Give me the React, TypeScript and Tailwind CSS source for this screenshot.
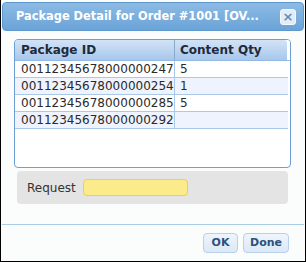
export default function App() {
  const rows = [
    { id: '00112345678000000247', qty: '5' },
    { id: '00112345678000000254', qty: '1' },
    { id: '00112345678000000285', qty: '5' },
    { id: '00112345678000000292', qty: '' },
  ];

  return (
    <div className="w-[306px] h-[262px] bg-[#fbfdfd] border-x border-b border-black flex flex-col font-['DejaVu_Sans',sans-serif]">
      {/* title bar */}
      <div className="mx-px mt-[2px] h-[29px] shrink-0 rounded-[4px] border border-[#5f98cd] bg-gradient-to-b from-[#8dbbe5] to-[#6aa3d8] flex items-center justify-between pl-[13px] pr-[7px]">
        <span className="text-white font-bold text-[11.4px] whitespace-nowrap">Package Detail for Order #1001 [OV...</span>
        <button className="w-[16px] h-[16px] rounded-[3px] bg-[#e2edf8] border border-[#f4f8fc] flex items-center justify-center text-[#5e8cbb] text-[13px] font-bold leading-none">
          ×
        </button>
      </div>

      {/* grid */}
      <div className="ml-[13px] mt-[8px] w-[277px] h-[129px] shrink-0 rounded-[4px] border border-[#6b9fd6] bg-white overflow-hidden flex flex-col">
        <div className="flex h-[21px] shrink-0 border-b border-[#93b8e2]">
          <div className="flex-1 flex text-[12px] font-bold text-[#1f2b3a] bg-gradient-to-b from-[#d3e3f6] to-[#a7c7ec] rounded-tr-[3px]">
            <div className="w-[160px] pl-[6px] flex items-center border-r border-[#8ba9c9]">Package ID</div>
            <div className="flex-1 pl-[5px] flex items-center">Content Qty</div>
          </div>
          <div className="w-[3px] bg-white" />
        </div>
        {rows.map((r, i) => (
          <div
            key={r.id}
            className={`flex h-[17px] text-[12px] text-[#2a2a2a] border-b border-[#a9c8ea] mr-[2px] ${i % 2 ? 'bg-[#eef3fd]' : 'bg-white'}`}
          >
            <div className="w-[160px] pl-[6px] flex items-center border-r border-[#a9c8ea]">{r.id}</div>
            <div className="flex-1 pl-[5px] flex items-center">{r.qty}</div>
          </div>
        ))}
      </div>

      {/* request */}
      <div className="ml-[16px] mt-[3px] w-[271px] h-[33px] shrink-0 rounded-[4px] bg-[#e4e4e4] flex items-center pl-[10px]">
        <span className="text-[12px] text-[#333333]">Request</span>
        <div className="ml-[7px] w-[105px] h-[17px] rounded-[4px] bg-[#fbeb8b] border border-[#f3d03f]" />
      </div>

      {/* footer */}
      <div className="mx-px mt-[20px] h-px bg-[#a9cde5] shrink-0" />
      <div className="flex justify-end gap-[5px] pr-[16px] mt-[8px]">
        <button className="w-[35px] h-[20px] rounded-[4px] border border-[#b8d0ea] bg-gradient-to-b from-[#eef5fc] to-[#dbe8f7] text-[11px] font-bold text-[#2c5179]">
          OK
        </button>
        <button className="w-[46px] h-[20px] rounded-[4px] border border-[#b8d0ea] bg-gradient-to-b from-[#eef5fc] to-[#dbe8f7] text-[11px] font-bold text-[#2c5179]">
          Done
        </button>
      </div>
    </div>
  );
}
